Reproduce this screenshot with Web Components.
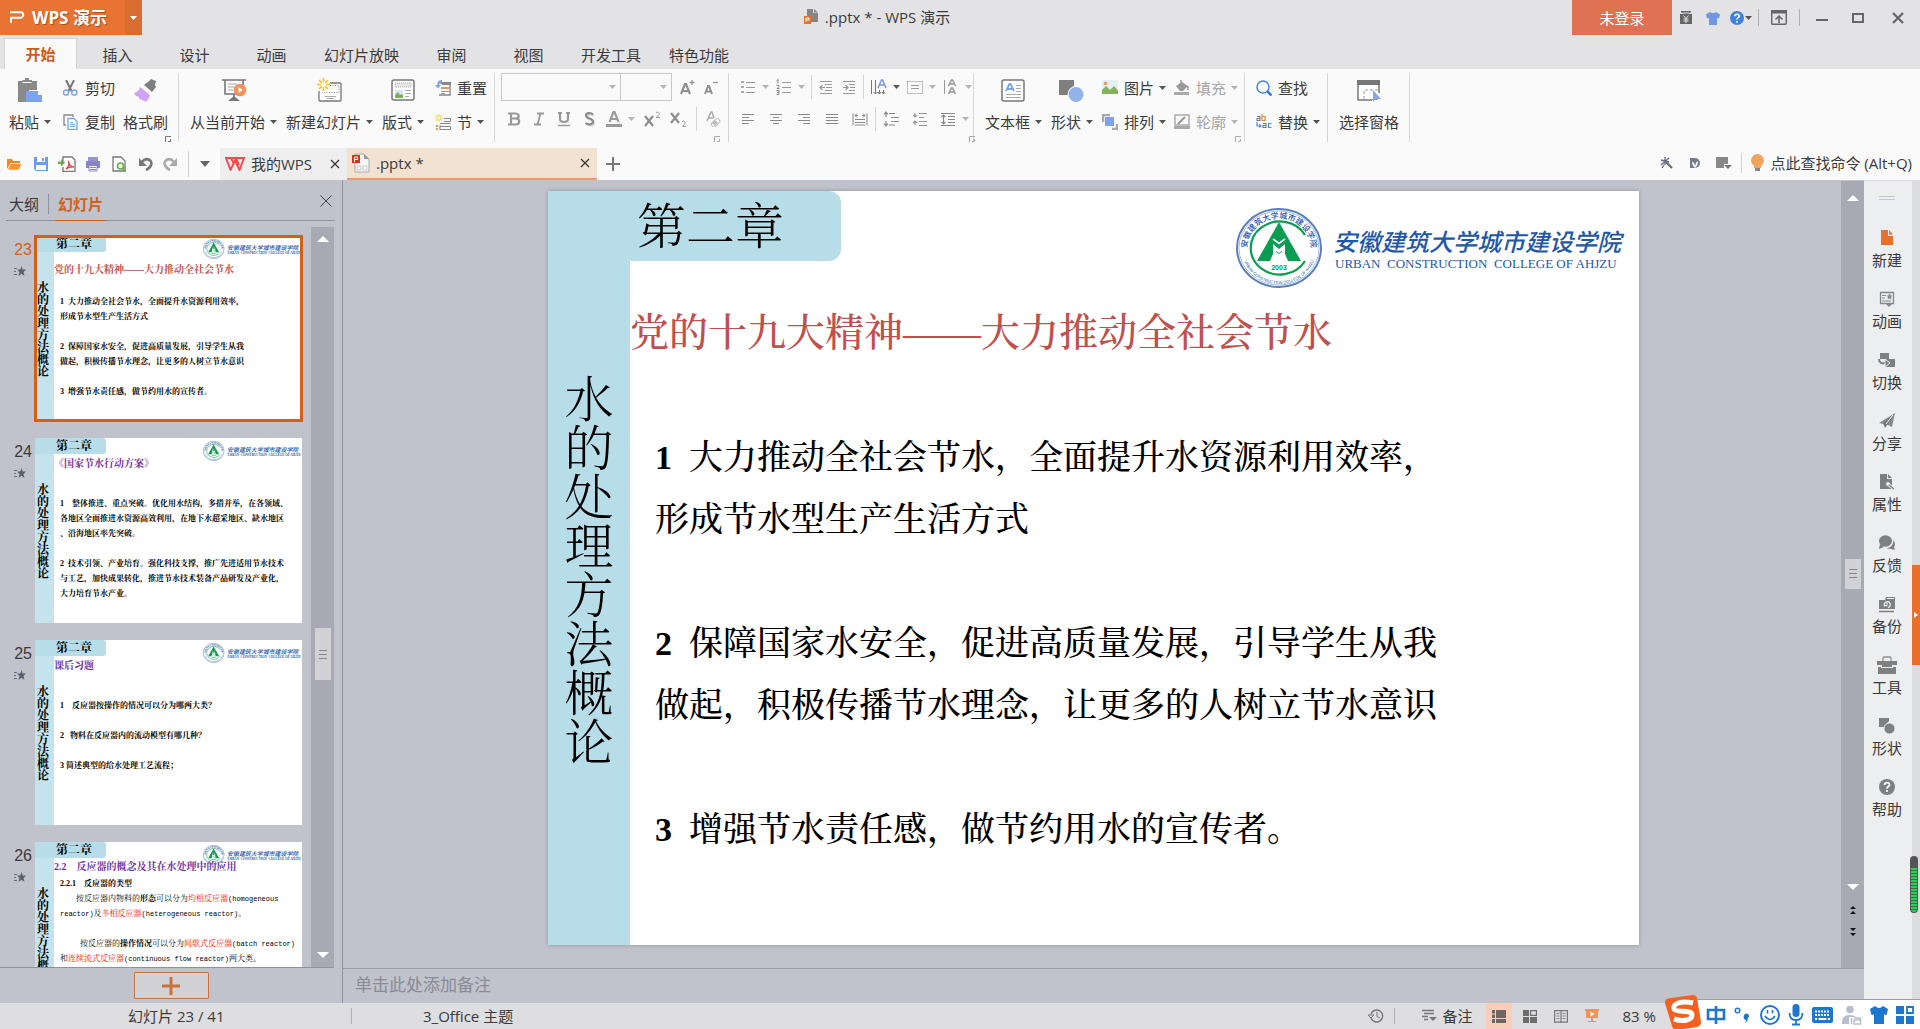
<!DOCTYPE html>
<html lang="zh-CN">
<head>
<meta charset="utf-8">
<title>.pptx * - WPS 演示</title>
<style>
    html, body {
        margin: 0;
        height: 100%;
    }

    body {
        overflow: hidden;
        font-family: "Open Sans", "Noto Sans CJK SC", sans-serif;
        font-size: 15px;
        line-height: 20px;
        color: #3a3a3a;
        background: #c0c2cc;
    }
</style>
</head>
<body>
<wps-app></wps-app>

<script>
// name: [width, height, markup]
const ICONS = {
    caret: [7, 4, '<path d="M0 0h7L3.500 4z" fill="currentColor"/>'],
    caretBig: [10, 6, '<path d="M0 0h10L5 6z" fill="#666"/>'],
    up: [12, 6, '<path d="M0 6h12L6 0z" fill="#fff"/>'],
    down: [12, 6, '<path d="M0 0h12L6 6z" fill="#fff"/>'],
    dblUp: [6, 8, '<path d="M0 3h6L3 0zM0 8h6L3 5z" fill="#111"/>'],
    dblDown: [6, 8, '<path d="M0 0h6L3 3zM0 5h6L3 8z" fill="#111"/>'],
    close: [10, 10, '<path d="M1 1l8 8M9 1l-8 8" stroke="#333" stroke-width="1.200" fill="none"/>'],
    closeThin: [12, 12, '<path d="M.5.5l11 11M11.500.5l-11 11" stroke="#444" fill="none"/>'],
    launcher: [6, 6, '<path d="M.5 6V.5H6M5.500 3v2.500H3" fill="none" stroke="#777"/>'],
    wpsP: [16, 13, '<path d="M1 1.200h10.500a2.500 2.500 0 0 1 0 5.500H2V12" fill="none" stroke="#fff" stroke-width="2"/>'],
    docTitle: [15, 15, '<path d="M3 0h6v4h5v9H3z" fill="#868686"/><path d="M10 0l4 3.500h-4z" fill="#868686"/><path d="M0 7h7v8H0z" fill="#e8702a"/><path d="M2 13V9h3v2H2.500" fill="none" stroke="#fff"/>'],
    yen: [12, 13, '<path d="M1 .5h10L9 2H3z" fill="none" stroke="#666"/><path d="M0 3h12v10H0z" fill="#666"/><path d="M3.500 4.500L6 7.500l2.500-3M3.500 8h5M3.500 10h5M6 7.500V12" stroke="#e3e3e5" fill="none"/>'],
    shirt: [14, 14, '<path d="M4 1c1 1.500 5 1.500 6 0l4 2.500-1 4-2-.5V14H3V7l-2 .5-1-4z" fill="#7097e4"/>'],
    helpBlue: [14, 14, '<circle cx="7" cy="7" r="7" fill="#3e82dc"/><path d="M4.800 5.300C5 2.500 9.400 2.800 9.200 5.300 9 6.800 7 6.600 7 8.500M7 10v1.700" stroke="#fff" stroke-width="1.600" fill="none"/>'],
    ribbonToggle: [16, 15, '<rect x=".7" y=".7" width="14.600" height="13.600" rx="1" fill="none" stroke="#666" stroke-width="1.400"/><path d="M0 0h16v3.500H0zM7.200 13V7h1.600v6z" fill="#666"/><path d="M4.500 9.500L8 6l3.500 3.500" stroke="#666" stroke-width="1.500" fill="none"/>'],
    min: [12, 10, '<path d="M0 6h12v2H0z" fill="#666"/>'],
    max: [12, 10, '<path d="M1 1h10v8H1z" fill="none" stroke="#666" stroke-width="2"/>'],
    quit: [12, 12, '<path d="M1 1l10 10M11 1L1 11" stroke="#666" stroke-width="2.300"/>'],
    paste: [26, 26, '<path d="M1 3h4.500V2H8V0h4v2h3v1h5v9H12v12H1z" fill="#8a8a8a"/><path d="M5.500 4.500h9" stroke="#fafafa"/><path d="M9 13h12l4 4v7H9z" fill="#7ca3ee"/><path d="M21 13v4h4z" fill="#fff"/>'],
    cut: [16, 16, '<path d="M3 0l5.500 11M11 0L5.500 11" stroke="#777" stroke-width="2"/><circle cx="3" cy="12.500" r="2.600" fill="none" stroke="#7ca3ee" stroke-width="1.500"/><circle cx="11.300" cy="12.500" r="2.600" fill="none" stroke="#7ca3ee" stroke-width="1.500"/>'],
    copy: [16, 16, '<path d="M3 11H1V1h9v2" fill="none" stroke="#888" stroke-width="1.300"/><path d="M5 4.500h6l3 3v8H5z" fill="#fff" stroke="#7ca3ee" stroke-width="1.300"/><path d="M7 8.500h3M7 10.500h5.500M7 12.500h5.500" stroke="#7ca3ee"/>'],
    brush: [26, 26, '<path d="M18 1l5 2-1 4 1 2-4 5-8-7 4-3z" fill="#7f7f7f"/><path d="M9 9l8 7-1 1-8-7z" fill="#fafafa"/><path d="M7 9l10 8c-1 4-3 6-5 7l-1-2-1 1-2-2-2 0 0-2-3-1-2-3c3-1 5-2 6-6z" fill="#cfa4f4"/>'],
    play: [26, 26, '<path d="M1 2h24M4 2v14h18V2M13 16v4" fill="none" stroke="#777" stroke-width="1.600"/><path d="M7 23l6-5 6 5z" fill="#777"/><path d="M7 6h9M7 9h6M7 12h5" stroke="#aaa"/><circle cx="19" cy="12" r="6.300" fill="#f0935b"/><path d="M17.500 9v6l4-3z" fill="#fff"/>'],
    newSlide: [26, 26, '<rect x="2" y="5" width="22" height="18" rx="1" fill="#fdfdfd" stroke="#777" stroke-width="1.300"/><path d="M13 7.500h9v7H5" fill="none" stroke="#888" stroke-dasharray="1 1.500"/><path d="M8 18.500h11M10 20.500h7" stroke="#aaa"/><path d="M0 0h13v13H0z" fill="#fafafa"/><path d="M6.500 0v13M0 6.500h13M2 2l9 9M11 2l-9 9" stroke="#fac22d" stroke-width="1.700"/><circle cx="6.500" cy="6.500" r="2.500" fill="#fff"/>'],
    layout: [26, 26, '<rect x="2" y="2" width="22" height="20" rx="2" fill="#fff" stroke="#777" stroke-width="1.500"/><path d="M5 5h16v4H5z" fill="#e6e6e6" stroke="#aaa" stroke-dasharray="1 1"/><path d="M5 12h8v8H5z" fill="#dbe8f4"/><path d="M5 20v-3l3-3 2 3 2-1 1 1v3z" fill="#7ab158"/><path d="M15 12.500h6M15 15.500h6M15 18.500h4" stroke="#aaa"/>'],
    reset: [16, 16, '<path d="M4 3h11v12H4" fill="#fff" stroke="#888" stroke-width="1.400"/><path d="M6 2h10v3H7z" fill="#888"/><path d="M6 8h8" stroke="#f0935b" stroke-width="2"/><path d="M6 11.500h8M6 13.500h4" stroke="#999"/><path d="M7 1C4 1 3 2.500 3 6" stroke="#7ca3ee" stroke-width="1.800" fill="none"/><path d="M0 5h6L3 8.500z" fill="#7ca3ee"/>'],
    section: [16, 16, '<path d="M9 4.500h6.500v3H9M5 9.500h10.500M5 12.500h10.500v3H5M5 11v5" fill="none" stroke="#888"/><path d="M4 0v8M0 4h8M1 1l6 6M7 1L1 7" stroke="#f8c83c"/><circle cx="4" cy="4" r="1.200" fill="#fff"/><path d="M1 11h2v2H1zM1 14h2v2H1z" fill="#f0935b"/>'],
    fontUp: [16, 16, '<path d="M1 15L5 5h1l4 10M2.500 12h6" fill="none" stroke="#8f8f8f" stroke-width="2.200"/><path d="M9.500 3.500h5M12 1v5" stroke="#999" stroke-width="1.300"/>'],
    fontDown: [16, 16, '<path d="M1 15l3-8h1l3 8M2.500 12.500h4" fill="none" stroke="#8f8f8f" stroke-width="2"/><path d="M9 3.500h5" stroke="#999" stroke-width="1.300"/>'],
    bold: [16, 16, '<path d="M5 2.500h4c5 0 5 5 0 5H5h4.500c5 0 5 6 0 6H5zM2 2.500h3v11H2" fill="none" stroke="#999" stroke-width="2.200"/>'],
    italic: [16, 16, '<path d="M6 2.500h7M3 13.500h7M9.500 2.500l-3 11" fill="none" stroke="#999" stroke-width="1.800"/>'],
    underline: [16, 16, '<path d="M2 2h4M10 2h4M4 2v6c0 4 8 4 8 0V2" fill="none" stroke="#999" stroke-width="2.200"/><path d="M2 14.500h12" stroke="#999" stroke-width="1.500"/>'],
    shadow: [16, 16, '<path d="M13 5C11 3 6 3 6 6c0 3 7 2 7 6 0 3-5 3-7 1" fill="none" stroke="#ddd" stroke-width="2.500"/><path d="M12 3.500C10 1.500 5 1.500 5 4.500c0 3.500 7 2.500 7 6 0 3.500-5 3.500-7.500 1.500" fill="none" stroke="#8c8c8c" stroke-width="2.200"/>'],
    fontColor: [16, 16, '<path d="M3.500 11L7.500 1h1l4 10M5 8h6" fill="none" stroke="#999" stroke-width="2.100"/><path d="M0 13h16v3H0z" fill="#999"/>'],
    sup: [17, 16, '<path d="M1 5l8 10M9 5L1 15" stroke="#8f8f8f" stroke-width="2.200"/><path d="M12 1.500c3-1 4 1 2.500 2.500L12 6.500h4" fill="none" stroke="#999"/>'],
    sub: [17, 16, '<path d="M1 2l8 10M9 2L1 12" stroke="#8f8f8f" stroke-width="2.200"/><path d="M12 10.500c3-1 4 1 2.500 2.500l-2 2.500h3.500" fill="none" stroke="#999"/>'],
    eraser: [16, 16, '<path d="M1 10L5 1h1l2 6M2.500 7h5" fill="none" stroke="#aaa" stroke-width="1.500"/><rect x="5" y="9" width="9" height="5" rx="1.500" transform="rotate(-45 10 11.500)" fill="#fff" stroke="#bbb"/><path d="M6 12l3 3 3-3-3-3z" fill="#bbb"/>'],
    bullets: [16, 16, '<path d="M1 2h3v2H1zM1 7h3v2H1zM1 12h3v2H1z" fill="#aaa"/><path d="M6 3.500h9M6 8.500h9M6 13.500h9" stroke="#999"/>'],
    numbers: [16, 16, '<path d="M2 .5v4M.5 1.500L2 .5M.5 6.500h2.500v1L1 9.500h2.500M.5 11.500h2.500v4H.5M1 13.500h2" stroke="#888" fill="none"/><path d="M6 3.500h9M6 8.500h9M6 13.500h9" stroke="#999"/>'],
    outdent: [16, 16, '<path d="M2 2.500h12M7 5.500h7M8 8.500h6M7 11.500h7M2 14.500h12M2 8.500h5M4.500 6L2 8.500 4.500 11" stroke="#999" fill="none" stroke-width="1.200"/>'],
    indent: [16, 16, '<path d="M2 2.500h12M8 5.500h6M9 8.500h5M8 11.500h6M2 14.500h12M2 8.500h5M4.500 6L7 8.500 4.500 11" stroke="#999" fill="none" stroke-width="1.200"/>'],
    textDir: [17, 16, '<path d="M1.500 1v14M5.500 1v14M9.500 11v4M13.500 11v4M3.500 13l2 2 2-2M8 13l1.500 2 1.500-2M12 13l1.500 2 1.500-2" fill="none" stroke="#777"/><path d="M8 9l3.500-8h1L16 9M9.500 6h5" fill="none" stroke="#7c98e0" stroke-width="1.600"/>'],
    vAlign: [16, 16, '<path d="M.5 2.500h15M.5 14.500h15M.5 2.500v12M15.500 2.500v12" fill="none" stroke="#888" stroke-dasharray="1 1"/><path d="M4 6.500h8M4 9.500h8" stroke="#999"/>'],
    spacing: [16, 16, '<path d="M1.500 1v14" stroke="#999"/><path d="M5.500 7l3-6h1l3 6M7 5h4M5.500 15l3-6h1l3 6M7 13h4" fill="none" stroke="#999" stroke-width="1.600"/>'],
    alignL: [16, 16, '<path d="M2 3.500h12M2 6.500h7M2 9.500h12M2 12.500h7" stroke="#888"/>'],
    alignC: [16, 16, '<path d="M2 3.500h12M5 6.500h6M2 9.500h12M5 12.500h6" stroke="#888"/>'],
    alignR: [16, 16, '<path d="M2 3.500h12M7 6.500h7M2 9.500h12M7 12.500h7" stroke="#888"/>'],
    justify: [16, 16, '<path d="M2 3.500h12M2 6.500h12M2 9.500h12M2 12.500h12" stroke="#888"/>'],
    distribute: [16, 16, '<path d="M1 2.500v12M15 2.500v12M3 8.500h10M3 11.500h10M3 14h10M3 4.500h3M10 4.500h3M5 2.500l-2 2 2 2M11 2.500l2 2-2 2" stroke="#888" fill="none"/>'],
    lineSp1: [17, 16, '<path d="M3 1v5M3 10v5M1 3.500L3 1l2 2.500M1 12.500L3 15l2-2.500M6 2.500h6M8 6.500h8M8 10.500h8M6 14h6" stroke="#888" fill="none" stroke-width="1.200"/>'],
    lineSp2: [16, 16, '<path d="M3 2v4M3 10v4M1 4l2 2 2-2M1 12l2-2 2 2M7 2.500h8M7 6.500h5M7 10.500h8M7 14.500h8" stroke="#999" fill="none" stroke-width="1.200"/>'],
    lineSp3: [16, 16, '<path d="M1 2.500h14M8 5.500h7M8 8.500h7M8 11.500h7M1 14.500h14M3.500 4v9M1.500 6l2-2 2 2M1.500 11l2 2 2-2" stroke="#888" fill="none" stroke-width="1.200"/>'],
    textBox: [26, 26, '<rect x="1" y="2" width="22" height="21" rx="2" fill="#fff" stroke="#777" stroke-width="1.500"/><path d="M5 13l3.500-7h1L13 13M6.500 11h5" fill="none" stroke="#7ca3ee" stroke-width="1.800"/><path d="M15 7.500h5M15 10.500h5M15 13.500h5M5 16.500h15M5 19.500h15" stroke="#aaa"/>'],
    shapes: [26, 26, '<path d="M0 2h15v15H0z" fill="#7f7f7f"/><circle cx="17" cy="16.500" r="8.500" fill="#fafafa"/><circle cx="17" cy="16.500" r="7.500" fill="#93b2ea"/>'],
    picture: [16, 16, '<path d="M0 0h16v14H0z" fill="#e6edf3"/><circle cx="3.500" cy="3.500" r="1.800" fill="#f0935b"/><path d="M0 14v-4l4-4 4 4 4-4 4 5v3z" fill="#83b25d"/>'],
    arrange: [16, 16, '<path d="M1 8V1h7M15 10v5h-5" fill="none" stroke="#aaa" stroke-width="2.500"/><path d="M3 3h9v9H3z" fill="#7ca3ee"/>'],
    fill: [16, 16, '<path d="M2 6l6-4 6 4-5 5H6z" fill="#999"/><path d="M7 0v5M14 6v4" stroke="#999" stroke-width="1.500"/><path d="M0 12h15v3H0z" fill="#aaa"/>'],
    outline: [16, 16, '<path d="M1 11V1h14v10z" fill="none" stroke="#aaa" stroke-width="1.500"/><path d="M4 10L11 3" stroke="#999" stroke-width="2.200"/><path d="M0 12h16v3H0z" fill="#aaa"/>'],
    find: [16, 16, '<circle cx="7" cy="7" r="6" fill="none" stroke="#4a86d8" stroke-width="1.500"/><path d="M11.500 11.500l4 4" stroke="#3a78d0" stroke-width="2.500"/>'],
    replace: [16, 16, '<path d="M1 2.500h3v4H1v-2h3M7 9.500h3v4H7v-2h3" fill="none" stroke="#777" stroke-width="1.100"/><path d="M6 0v6.500h3v-4H6" fill="none" stroke="#e08a4a" stroke-width="1.200"/><path d="M15.500 9.500h-3v4h3M1 8v4h4M3.500 10.500L5 12l-1.500 1.500" fill="none" stroke="#4a90dd" stroke-width="1.200"/>'],
    selectPane: [26, 26, '<path d="M2 3h21v19H2z" fill="#fff" stroke="#777" stroke-width="1.500"/><path d="M1 2h23v5H1z" fill="#777"/><path d="M8 21v-9h15M23 12v4" fill="none" stroke="#999" stroke-dasharray="3 2"/><path d="M16 22h8v3h-8zM22 15h3v8h-3z" fill="#fafafa"/><path d="M17 12v12l2.500-3h5.500z" fill="#8aa4e8"/>'],
    open: [18, 16, '<path d="M1 13V3h5l1 2h7v2H5z" fill="#f5871f"/><path d="M4.500 7.500H16L13 14H1.500z" fill="#ff9331" stroke="#fff" stroke-width=".6"/>'],
    save: [18, 16, '<path d="M2 1h14v14H4l-2-2z" fill="#6c9cec"/><path d="M5 1h8v5H5zM4 9h10v5H4z" fill="#fff"/><path d="M10 2h2v3h-2z" fill="#6c9cec"/>'],
    pdf: [18, 16, '<path d="M5 5V1h9l3 3v11.500H5V11" fill="#fff" stroke="#777" stroke-width="1.300"/><path d="M0 5.500h3V3l4 3.700-4 3.800V8H0z" fill="#69a84e"/><path d="M8 13c4-3 3-6 2.500-8 .5 5 3 6 5.500 6-3-.5-5 0-8 2z" fill="none" stroke="#e04040" stroke-width="1.300"/>'],
    print: [18, 16, '<path d="M4 1h10v4H4z" fill="#9894cf"/><path d="M2 5h14v7H2z" fill="#8985c4"/><path d="M5 9.500h8V15H5z" fill="#fff" stroke="#8985c4"/><path d="M6 11.500h6M6 13.500h6" stroke="#8985c4"/>'],
    preview: [18, 16, '<path d="M3 15V1h8l4 4v10z" fill="#fff" stroke="#777" stroke-width="1.300"/><circle cx="10.500" cy="10" r="3" fill="#fff" stroke="#69a84e" stroke-width="1.600"/><path d="M12.500 12l3 3.500" stroke="#69a84e" stroke-width="2"/>'],
    undo: [18, 16, '<path d="M6 6C11 0 17 5 15 9c-1 3-3 4-5 5" fill="none" stroke="#777" stroke-width="2.600"/><path d="M3 2v8h8z" fill="#777"/>'],
    redo: [18, 16, '<path d="M12 6C7 0 1 5 3 9c1 3 3 4 5 5" fill="none" stroke="#aaa" stroke-width="2.600"/><path d="M15 2v8H7z" fill="#aaa"/>'],
    wpsW: [20, 14, '<path d="M1 1h18l-4.500 12L10 3.500 5.500 13zM6 1l2.500 5M11 1l3 7" fill="none" stroke="#f4484c" stroke-width="1.900"/>'],
    docTab: [18, 20, '<path d="M3 1h9l5 5v13H3z" fill="#f6f6f6" stroke="#aaa"/><path d="M12 1v5h5z" fill="#999"/><path d="M0 2h8v8H0z" fill="#cc3a14"/><path d="M2.500 9V4h3v2.500h-3" fill="none" stroke="#fff"/><path d="M5 13h4v4H5zM11 13h4v4h-4z" fill="none" stroke="#ccc"/>'],
    plus: [14, 14, '<path d="M0 7h14M7 0v14" stroke="#777" stroke-width="2"/>'],
    wand: [14, 12, '<path d="M6 5l6 6" stroke="#666b7a" stroke-width="2.200"/><path d="M5 0v8M1 3l8 2M9 1L1 8M2 11l2-3" stroke="#666b7a" stroke-width="1.300"/>'],
    docer: [12, 12, '<path d="M1 1h5a5 5 0 0 1 0 10H1z" fill="#767b8c"/><path d="M6 11C3 8 3 6 3.500 4.500 5 6 6 7 6 11zM6 11c0-4 1-6 3-7 0 3-1 5-3 7z" fill="#fff"/>'],
    boxDown: [16, 14, '<path d="M0 1h12v7H8v4H0z" fill="#888"/><path d="M8 9h8l-4 4z" fill="#777"/>'],
    bulb: [13, 18, '<circle cx="6.500" cy="6.500" r="6.500" fill="#f0a45f"/><path d="M3 10h7v4H3z" fill="#f0a45f"/><path d="M4 14h5v3H4z" fill="#888"/>'],
    star: [12, 10, '<path d="M0 2.500h3M0 5.500h2M0 8.500h3" stroke="#666c7a"/><path d="M7.500 0l1.200 3.500H12L9.500 6l1 4-3-2.300-3 2.300 1-4L3 3.500h3.300z" fill="#59606e"/>'],
    addSlide: [18, 18, '<path d="M0 9h18M9 0v18" stroke="#c9713f" stroke-width="3"/>'],
    grip: [8, 9, '<path d="M0 .5h8M0 4.500h8M0 8.500h8" stroke="#888"/>'],
    sideGrip: [16, 4, '<path d="M0 .5h16M0 3.500h16" stroke="#c4c8d2"/>'],
    sNew: [20, 18, '<path d="M4 1h7v6h5v9H4z" fill="#e8702a"/><path d="M12 1l4 4.500h-4z" fill="#e8702a"/>'],
    sAnim: [20, 18, '<path d="M3.500 2.500h13v11h-13z" fill="none" stroke="#888" stroke-width="1.300"/><path d="M5 5.500h4M5 8h3M5 11h9" stroke="#888"/><path d="M12.500 3l1 2.500h2L14 7l.5 2.500-2-1.200-2 1.200L11 7 9.500 5.500h2zM9 14h6l-3 3z" fill="#888"/>'],
    sSwitch: [20, 18, '<path d="M3 2h9v6H3zM9 8h9v8H9z" fill="#7f7f7f"/><path d="M2 8c0 4 3 5 7 4" fill="none" stroke="#7f7f7f" stroke-width="2"/><path d="M8 8l5 4-5 4z" fill="#7f7f7f" stroke="#eceef0"/>'],
    sShare: [20, 18, '<path d="M2 11L18 1l-3 14-4-2z" fill="#888"/><path d="M6 11l2 5 2-3 5-8z" fill="#777"/><path d="M16 3l-7 9" stroke="#eceef0"/>'],
    sProps: [20, 18, '<path d="M3 1h7v5h5v10H3z" fill="#7f7f7f"/><path d="M11 1l4 4h-4z" fill="#7f7f7f"/><circle cx="11" cy="11" r="2.500" fill="#eceef0" stroke="#7f7f7f"/><path d="M12 12l5 4" stroke="#eceef0" stroke-width="3"/><path d="M12 12l5 4" stroke="#7f7f7f" stroke-width="1.500"/>'],
    sFeedback: [20, 18, '<ellipse cx="8.500" cy="7" rx="6.500" ry="5.800" fill="#7f7f7f"/><path d="M3 10l-1 5 5-2zM16 6c3 3 2 6 1 7l1 3-4-1c-3 0-4-1-4-1 4 0 7-4 6-8z" fill="#7f7f7f"/>'],
    sBackup: [20, 18, '<path d="M2 5h6l1-3h9v12H2z" fill="#7f7f7f"/><path d="M10 3.500h7" stroke="#eceef0"/><path d="M2 16.500h15" stroke="#7f7f7f" stroke-width="1.500"/><path d="M8 11.500a3 3 0 1 1 3 1" fill="none" stroke="#eceef0" stroke-width="1.300"/><path d="M10 7v4l-3-1" fill="none" stroke="#eceef0"/>'],
    sTools: [20, 18, '<path d="M6 5V2.500Q6 1 7 1h6q1 0 1 1.500V5" fill="none" stroke="#8f8f8f" stroke-width="1.300"/><path d="M0 5h20v4h-5v2H5V9H0zM1 11h3v1h12v-1h3v7H1z" fill="#7f7f7f"/>'],
    sShapes: [20, 18, '<path d="M2 1h10v3l-5 6H2z" fill="#7f7f7f"/><circle cx="12.500" cy="11.500" r="5.500" fill="#7f7f7f" stroke="#eceef0"/>'],
    sHelp: [20, 18, '<circle cx="10" cy="9" r="8" fill="#7f7f7f"/><path d="M7.500 7c.3-3.500 5.300-3 5 0-.2 1.700-2.500 1.500-2.500 3.800M10 12v2" stroke="#fff" stroke-width="1.700" fill="none"/>'],
    history: [16, 16, '<path d="M3 10a6 6 0 1 0 0-4" fill="none" stroke="#777" stroke-width="1.400"/><path d="M0 7h6L3 10zM9 4v4.500l3 1.500" fill="none" stroke="#777"/>'],
    notes: [16, 14, '<path d="M1 1.500h12M3 4.500h10M1 7.500h6M3 10.500h4" stroke="#777" stroke-width="1.300"/><path d="M8 8h8l-4 4z" fill="#777"/>'],
    vNormal: [14, 13, '<path d="M0 0h3v3.500H0zM0 4.500h3V8H0zM0 9h3v4H0zM4 0h10v8H4zM4 9h10v4H4z" fill="#6f6663"/>'],
    vSorter: [14, 13, '<path d="M0 0h6v6H0zM0 7h6v6H0zM7 7h7v6H7z" fill="#6c6c6c"/><path d="M7.600.6h5.800v4.800H7.600z" fill="none" stroke="#6c6c6c" stroke-width="1.200"/>'],
    vRead: [14, 13, '<path d="M.6.6h12.800v11.500H.6zM7 0v13" fill="none" stroke="#777" stroke-width="1.200"/><path d="M2.500 3.500h3M2.500 6h3M2.500 8.500h3M8.500 3.500h3M8.500 6h3M8.500 8.500h3" stroke="#888"/>'],
    vShow: [14, 14, '<path d="M0 0h14v2h-1v7H8v3h3v1H3v-1h3V9H1V2H0z" fill="#f0935b"/><path d="M5.500 2.500v5l4-2.500z" fill="#fff"/>'],
    sogou: [38, 34, '<path d="M4 3.500L29 0q3 0 4 3l4 24q0 4-4 5l-20 3q-4 0-5-4L1 8q0-4 3-4.500z" fill="#f4601f"/><path d="M29 8C17 5 8 9 10 14c2 4 18 0 18 6 0 5-8 7-18 4" fill="none" stroke="#fff" stroke-width="5"/>'],
    zhong: [20, 20, '<path d="M2 5h16v9H2zM10 1v18" fill="none" stroke="#1e76cf" stroke-width="2.600"/>'],
    punct: [18, 20, '<circle cx="3.500" cy="5.500" r="2.300" fill="none" stroke="#1e76cf" stroke-width="1.500"/><path d="M10 11a2.500 2.500 0 1 1 4 2q0 3-3 5 1-2 1-3a2.500 2.500 0 0 1-2-4z" fill="#1e76cf"/>'],
    smile: [20, 20, '<circle cx="10" cy="10" r="9" fill="none" stroke="#1e76cf" stroke-width="2"/><path d="M5 11q5 7 10 0M7.500 5v3.500M12.500 5v3.500" fill="none" stroke="#1e76cf" stroke-width="1.600"/>'],
    mic: [16, 22, '<rect x="4.500" y="0" width="7" height="13" rx="3.500" fill="#1e76cf"/><path d="M1.500 9q0 7 6.500 7t6.500-7M8 16v5M4 20.500h8" fill="none" stroke="#1e76cf" stroke-width="1.800"/>'],
    keyboard: [22, 18, '<rect x="0" y="1" width="21" height="16" rx="2" fill="#1e76cf"/><path d="M3 5.500h15M3 9h15" stroke="#fff" stroke-width="2" stroke-dasharray="2 1"/><path d="M3 13h2M6.500 13h8M16 13h2" stroke="#fff" stroke-width="2"/>'],
    person: [20, 20, '<circle cx="8" cy="4.500" r="3.800" fill="#b6bed0"/><path d="M0 19q-1-9 8-9 4 0 6 2H7v7z" fill="#b6bed0"/><path d="M9.500 13v6M12 13h6.500v6H12v-4h6" fill="none" stroke="#b6bed0" stroke-width="1.500"/>'],
    shirtBlue: [18, 20, '<path d="M5 1q4 4 8 0l5 3-1.500 6L14 9.500V19H4V9.500L1.500 10 0 4z" fill="#1e76cf"/>'],
    apps: [18, 20, '<path d="M0 1h8v8H0zM0 11h8v8H0zM10 11h8v8h-8z" fill="#1e76cf"/><path d="M11 2h6v6h-6z" fill="none" stroke="#1e76cf" stroke-width="1.800"/>']
};

class WpsElement extends HTMLElement {
    constructor() {
        super();
        this.attachShadow({ mode: 'open' });
    }

    connectedCallback() {
        const template = document.createElement('template');
        template.innerHTML = `<style>${this.getStyles()}</style>${this.getTemplate()}`;
        this.shadowRoot.replaceChildren(template.content.cloneNode(true));
    }
}

class WpsIcon extends WpsElement {
    getStyles() {
        return `
            :host { display: block; flex: none; }
            svg { display: block; }
        `;
    }

    getTemplate() {
        const [w, h, body] = ICONS[this.getAttribute('name')];
        return `<svg width="${w}" height="${h}" viewBox="0 0 ${w} ${h}" aria-hidden="true">${body}</svg>`;
    }
}

// Button with an icon, an optional text and an optional caret
class WpsButton extends WpsElement {
    getStyles() {
        return `
            :host { display: block; flex: none; }
            button {
                display: flex;
                align-items: center;
                gap: var(--gap, 6px);
                padding: 0;
                border: 0;
                background: none;
                font: inherit;
                color: inherit;
                white-space: nowrap;
            }
            .label { display: flex; align-items: center; gap: 5px; }
            .caret { color: #555; }
            :host([large]) button { flex-direction: column; gap: var(--gap, 5px); }
            :host([large]) .label { line-height: 26px; }
            :host([off]) button { color: #a6a6a6; }
            :host([off]) .caret { color: #b4b4b4; }
        `;
    }

    getTemplate() {
        const text = this.textContent.trim();
        const tip = this.getAttribute('tip');
        const caret = this.hasAttribute('caret') ? '<wps-icon class="caret" name="caret"></wps-icon>' : '';
        return `
        <button type="button" ${tip ? `aria-label="${tip}"` : ''}>
            <wps-icon name="${this.getAttribute('icon')}"></wps-icon>
            ${text ? `<span class="label"><slot></slot>${caret}</span>` : caret}
        </button>
        `;
    }
}

class WpsTitlebar extends WpsElement {
    getStyles() {
        return `
            :host { display: flex; align-items: stretch; height: 35px; background: #e3e3e5; }
            button { padding: 0; border: 0; font: inherit; }
            .brand {
                display: flex;
                align-items: center;
                gap: 7px;
                width: 125px;
                padding-left: 9px;
                background: #e87332;
                color: #fff;
                font-size: 17px;
                font-weight: 700;
                text-shadow: 1px 1px 1px #a8501c;
            }
            .more { display: grid; place-items: center; width: 17px; background: #d96c30; color: #fff; }
            .doc { flex: 1; display: flex; align-items: center; justify-content: center; gap: 6px; padding: 0 0 2px 40px; }
            .login { width: 100px; background: #df7153; color: #fff; }
            .tools { display: flex; align-items: center; gap: 14px; padding-left: 8px; }
            .tools hr { width: 1px; height: 17px; margin: 0 -2px; border: 0; background: #b0b0b4; }
            .tools .help { --gap: 1px; margin: 0 -6px 0 -4px; }
            .win { display: flex; align-items: center; gap: 24px; padding: 0 16px 0 18px; }
            .win :last-child { padding-left: 4px; }
        `;
    }

    getTemplate() {
        return `
        <button class="brand"><wps-icon name="wpsP"></wps-icon>WPS 演示</button>
        <button class="more" aria-label="应用菜单"><wps-icon name="caret"></wps-icon></button>
        <div class="doc"><wps-icon name="docTitle"></wps-icon><span>.pptx * - WPS 演示</span></div>
        <button class="login">未登录</button>
        <div class="tools">
            <wps-button icon="yen" tip="会员"></wps-button>
            <wps-button icon="shirt" tip="皮肤"></wps-button>
            <wps-button class="help" icon="helpBlue" tip="帮助" caret></wps-button>
            <hr>
            <wps-button icon="ribbonToggle" tip="功能区"></wps-button>
            <hr>
        </div>
        <div class="win">
            <wps-button icon="min" tip="最小化"></wps-button>
            <wps-button icon="max" tip="最大化"></wps-button>
            <wps-button icon="quit" tip="关闭"></wps-button>
        </div>
        `;
    }
}

class WpsMenu extends WpsElement {
    getStyles() {
        return `
            :host { display: block; background: #e3e3e5; }
            nav { display: flex; height: 34px; padding-left: 4px; }
            button {
                min-width: 77px;
                padding: 6px 14px 0;
                border: 0;
                background: none;
                font: inherit;
                color: inherit;
            }
            .active {
                min-width: 73px;
                margin: 3px 2px 0 0;
                padding-top: 0;
                border: 1px solid #d4d4d6;
                border-bottom: 0;
                background: #fafafa;
                color: #d2571c;
                font-weight: 700;
            }
        `;
    }

    getTemplate() {
        const tabs = ['开始', '插入', '设计', '动画', '幻灯片放映', '审阅', '视图', '开发工具', '特色功能'];
        return `<nav>${tabs.map((t, i) => `<button ${i ? '' : 'class="active"'}>${t}</button>`).join('')}</nav>`;
    }
}

class WpsGroup extends WpsElement {
    getStyles() {
        return `
            :host {
                display: grid;
                flex: none;
                height: 69px;
                margin-top: 4px;
                border-right: 1px solid #d6d6d8;
            }
            .content { grid-area: 1 / 1; display: flex; padding: 0 11px; }
            .launcher { grid-area: 1 / 1; place-self: end; margin-right: 8px; }
            :host([tight]) .content { padding: 0 6px; }
            :host([off]) .launcher { opacity: .6; }
        `;
    }

    getTemplate() {
        const launcher = this.hasAttribute('launcher') ? '<wps-icon class="launcher" name="launcher"></wps-icon>' : '';
        return `<div class="content"><slot></slot></div>${launcher}`;
    }
}

class WpsRibbon extends WpsElement {
    getStyles() {
        return `
            :host { display: flex; height: 79px; background: #fafafa; }
            wps-button[large] { padding-top: 5px; }
            .rows { display: grid; grid-template-rows: 34px 34px; align-items: center; margin-top: -2px; }
            .fmt { display: grid; grid-template-rows: 28px 36px; }
            .line { display: flex; align-items: center; gap: 9px; }
            .line hr { width: 1px; height: 24px; margin: 0; border: 0; background: #d6d6d8; }
            .fonts { gap: 0; }
            .fonts wps-button { padding-left: 8px; }
            select {
                box-sizing: border-box;
                height: 28px;
                border: 1px solid #c8c8ca;
                border-radius: 0;
                background: #fafafa;
                appearance: none;
            }
            .combo { display: grid; align-items: center; justify-items: end; }
            .combo > * { grid-area: 1 / 1; }
            .combo wps-icon { margin-right: 5px; color: #b4b4b4; pointer-events: none; }
            .name { width: 120px; }
            .size { width: 52px; margin-left: -1px; }
            .para .line { gap: 7px; }
            .para .line hr { margin: 0 -1px; }
            .para .wide { gap: 12px; }
            .para .wide hr { margin: 0 -5px; }
        `;
    }

    getTemplate() {
        return `
        <wps-group launcher style="width:178px">
            <wps-button large icon="paste" caret style="margin-left:-2px">粘贴</wps-button>
            <div class="rows" style="margin-left:12px">
                <wps-button icon="cut">剪切</wps-button>
                <wps-button icon="copy">复制</wps-button>
            </div>
            <wps-button large icon="brush" style="margin-left:8px">格式刷</wps-button>
        </wps-group>
        <wps-group style="width:315px">
            <wps-button large icon="play" caret>从当前开始</wps-button>
            <wps-button large icon="newSlide" caret style="margin-left:9px">新建幻灯片</wps-button>
            <wps-button large icon="layout" caret style="margin-left:9px">版式</wps-button>
            <div class="rows" style="margin-left:11px">
                <wps-button icon="reset">重置</wps-button>
                <wps-button icon="section" caret>节</wps-button>
            </div>
        </wps-group>
        <wps-group tight launcher off style="width:233px">
            <div class="fmt">
                <div class="line fonts">
                    <span class="combo name"><select class="name" aria-label="字体"></select><wps-icon name="caret"></wps-icon></span>
                    <span class="combo size"><select class="size" aria-label="字号"></select><wps-icon name="caret"></wps-icon></span>
                    <wps-button icon="fontUp" tip="增大字号"></wps-button>
                    <wps-button icon="fontDown" tip="减小字号"></wps-button>
                </div>
                <div class="line" style="padding-left:5px">
                    <wps-button icon="bold" tip="加粗"></wps-button>
                    <wps-button icon="italic" tip="倾斜"></wps-button>
                    <wps-button icon="underline" tip="下划线"></wps-button>
                    <wps-button icon="shadow" tip="阴影"></wps-button>
                    <wps-button icon="fontColor" tip="字体颜色" caret off></wps-button>
                    <wps-button icon="sup" tip="上标"></wps-button>
                    <wps-button icon="sub" tip="下标"></wps-button>
                    <hr>
                    <wps-button icon="eraser" tip="清除格式"></wps-button>
                </div>
            </div>
        </wps-group>
        <wps-group launcher off style="width:244px">
            <div class="fmt para">
                <div class="line">
                    <wps-button icon="bullets" tip="项目符号" caret off></wps-button>
                    <wps-button icon="numbers" tip="编号" caret off></wps-button>
                    <hr>
                    <wps-button icon="outdent" tip="减少缩进"></wps-button>
                    <wps-button icon="indent" tip="增加缩进"></wps-button>
                    <hr>
                    <wps-button icon="textDir" tip="文字方向" caret></wps-button>
                    <wps-button icon="vAlign" tip="对齐文本" caret off></wps-button>
                    <wps-button icon="spacing" tip="字符间距" caret off></wps-button>
                </div>
                <div class="line wide">
                    <wps-button icon="alignL" tip="左对齐"></wps-button>
                    <wps-button icon="alignC" tip="居中"></wps-button>
                    <wps-button icon="alignR" tip="右对齐"></wps-button>
                    <wps-button icon="justify" tip="两端对齐"></wps-button>
                    <wps-button icon="distribute" tip="分散对齐"></wps-button>
                    <hr>
                    <wps-button icon="lineSp1" tip="增大段落间距"></wps-button>
                    <wps-button icon="lineSp2" tip="减小段落间距"></wps-button>
                    <wps-button icon="lineSp3" tip="行距" caret off></wps-button>
                </div>
            </div>
        </wps-group>
        <wps-group launcher off style="width:270px">
            <wps-button large icon="textBox" caret>文本框</wps-button>
            <wps-button large icon="shapes" caret style="margin-left:9px">形状</wps-button>
            <div class="rows" style="margin-left:9px">
                <wps-button icon="picture" caret>图片</wps-button>
                <wps-button icon="arrange" caret>排列</wps-button>
            </div>
            <div class="rows" style="margin-left:8px">
                <wps-button icon="fill" caret off>填充</wps-button>
                <wps-button icon="outline" caret off>轮廓</wps-button>
            </div>
        </wps-group>
        <wps-group style="width:82px">
            <div class="rows">
                <wps-button icon="find">查找</wps-button>
                <wps-button icon="replace" caret>替换</wps-button>
            </div>
        </wps-group>
        <wps-group style="width:81px">
            <wps-button large icon="selectPane">选择窗格</wps-button>
        </wps-group>
        `;
    }
}

class WpsDocbar extends WpsElement {
    getStyles() {
        return `
            :host { display: flex; align-items: stretch; height: 32px; background: #fafafa; }
            .quick { display: flex; align-items: center; gap: 8px; padding: 0 10px 0 6px; }
            hr { width: 1px; height: 26px; margin: 0; border: 0; background: #d0d0d2; }
            .tab { box-sizing: border-box; display: flex; align-items: center; gap: 6px; padding: 0 7px 0 5px; background: #eee; }
            .tab span { flex: 1; }
            .home { width: 127px; }
            .doc { width: 250px; border-bottom: 2px solid #ec9a6c; background: #f1e2d2; }
            .add { align-self: center; padding-left: 9px; }
            .right { flex: 1; display: flex; align-items: center; justify-content: flex-end; gap: 15px; padding: 0 8px 2px 0; }
            .right hr { height: 20px; margin: 0 -6px; }
        `;
    }

    getTemplate() {
        return `
        <div class="quick">
            <wps-button icon="open" tip="打开"></wps-button>
            <wps-button icon="save" tip="保存"></wps-button>
            <wps-button icon="pdf" tip="输出为PDF"></wps-button>
            <wps-button icon="print" tip="打印"></wps-button>
            <wps-button icon="preview" tip="打印预览"></wps-button>
            <wps-button icon="undo" tip="撤销"></wps-button>
            <wps-button icon="redo" tip="恢复"></wps-button>
            <hr>
            <wps-button icon="caretBig" tip="自定义" style="padding-left:3px"></wps-button>
        </div>
        <div class="tab home">
            <wps-icon name="wpsW"></wps-icon><span>我的WPS</span><wps-button icon="close" tip="关闭"></wps-button>
        </div>
        <div class="tab doc">
            <wps-icon name="docTab"></wps-icon><span>.pptx *</span><wps-button icon="close" tip="关闭"></wps-button>
        </div>
        <wps-button class="add" icon="plus" tip="新建"></wps-button>
        <div class="right">
            <wps-button icon="wand" tip="美化"></wps-button>
            <wps-button icon="docer" tip="稻壳"></wps-button>
            <wps-button icon="boxDown" tip="任务窗格"></wps-button>
            <hr>
            <wps-button icon="bulb">点此查找命令 (Alt+Q)</wps-button>
        </div>
        `;
    }
}

class WpsScrollbar extends WpsElement {
    getStyles() {
        return `
            :host { display: flex; flex: none; flex-direction: column; align-items: center; width: 23px; background: #a9a9b3; }
            .end { display: grid; place-items: center; height: 24px; }
            .thumb { display: grid; place-items: center; width: 16px; height: ${this.getAttribute('size')}px; background: #d2d2d6; }
        `;
    }

    getTemplate() {
        return `
        <wps-icon class="end" name="up"></wps-icon>
        <div style="flex:${this.getAttribute('before')}"></div>
        <div class="thumb"><wps-icon name="grip"></wps-icon></div>
        <div style="flex:${this.getAttribute('after')}"></div>
        <wps-icon class="end" name="down"></wps-icon>
        <slot></slot>
        `;
    }
}

class CollegeLogo extends WpsElement {
    getStyles() {
        return `
            :host { display: block; }
            svg { display: block; width: 100%; height: auto; overflow: visible; }
            text { font-family: "Liberation Serif", "Noto Sans CJK SC", serif; fill: #2257a6; }
        `;
    }

    getTemplate() {
        return `
        <svg viewBox="0 0 391 80" role="img" aria-label="安徽建筑大学城市建设学院">
            <g transform="translate(43 40)">
                <ellipse rx="42" ry="39" fill="#fff" stroke="#5a7fbd" stroke-width="2"/>
                <ellipse rx="40" ry="37" fill="none" stroke="#a9bedd"/>
                <path d="M26-13A29 26.500 0 1 0 26 13" fill="none" stroke="#0a9c50" stroke-width="2.200"/>
                <path d="M0-26L22 13H-22z" fill="#0a9c50"/>
                <path d="M-6-9L0-4.500 6-9" fill="none" stroke="#fff" stroke-width="1.600"/>
                <path d="M-6-4L0 1 6-4V6L9 13H3V3L0 5-3 3V13H-9L-6 6z" fill="#fff"/>
                <path d="M-3 4L0 6 3 4V13H-3z" fill="#fff"/>
                <text y="22" text-anchor="middle" style="font:bold 7px Liberation Sans;fill:#0a9c50">2003</text>
                <path id="top" d="M-30 11A32 30 0 1 1 30 11" fill="none"/>
                <path id="bottom" d="M-36 9A37 35 0 0 0 36 9" fill="none"/>
                <text font-size="8" font-weight="500" text-anchor="middle"><textPath href="#top" startOffset="50%">安徽建筑大学城市建设学院</textPath></text>
                <text style="font-family:Liberation Sans" font-size="4" text-anchor="middle"><textPath href="#bottom" startOffset="50%">URBAN CONSTRUCTION COLLEGE OF AHJZU</textPath></text>
            </g>
            <text x="97" y="43" font-size="24" font-weight="500" font-style="italic">安徽建筑大学城市建设学院</text>
            <text x="99" y="60" font-size="13" style="white-space:pre">URBAN  CONSTRUCTION  COLLEGE OF AHJZU</text>
        </svg>
        `;
    }
}

class WpsSlide extends WpsElement {
    getStyles() {
        return `
            :host {
                display: grid;
                grid-template-columns: 82px 1fr;
                grid-template-rows: 70px 1fr;
                overflow: hidden;
                background: #fff;
                color: #000;
                font-family: "Liberation Serif", "Noto Serif CJK SC", "Noto Sans CJK SC", serif;
                font-size: 34px;
                line-height: 62px;
                font-weight: 500;
            }
            h2, h3 { margin: 0; }
            h2, .rail { font-size: 49px; font-weight: 300; }
            .rail {
                grid-area: 1 / 1 / 3 / 2;
                display: flex;
                justify-content: center;
                padding-top: 185px;
                background: #b7dee8;
                line-height: 49px;
            }
            .rail span { width: 1em; word-break: break-all; }
            .chapter {
                grid-area: 1 / 1 / 2 / 3;
                justify-self: start;
                box-sizing: border-box;
                width: 293px;
                padding: 4px 0 0 89px;
                border-radius: 0 12px 12px 0;
                background: #b7dee8;
                line-height: 66px;
            }
            college-logo { grid-area: 1 / 2; justify-self: end; width: 391px; margin: 17px 12px 0 0; }
            .page { grid-area: 2 / 2; }
            .title {
                padding: 43px 0 65px;
                color: #c0504d;
                font-size: 39px;
                font-weight: 500;
                line-height: 58px;
                white-space: pre;
            }
            .body { padding-left: 25px; white-space: pre; }

            /* Sidebar preview */
            :host([thumb]) {
                grid-template-columns: 19px 1fr;
                grid-template-rows: 16px 1fr;
                font-size: 8px;
                line-height: 15px;
                font-weight: 700;
            }
            :host([thumb]) .rail {
                justify-content: flex-start;
                padding: 46px 0 0 2px;
                background: #c5e3ec;
                font-size: 12px;
                font-weight: 700;
                line-height: 12px;
            }
            :host([thumb]) .chapter {
                width: 71px;
                padding: 0 0 0 21px;
                border-radius: 0 3px 3px 0;
                font-size: 12px;
                font-weight: 700;
                line-height: 16px;
            }
            :host([thumb]) college-logo { width: 97px; margin: 3px 2px 0 0; }
            :host([thumb]) .title { padding: 2px 0 24px; color: #7030a0; font-size: 10px; font-weight: 700; line-height: 16px; }
            :host([thumb]) .body { padding-left: 6px; }
            :host([lead]) .title { padding: 10px 0 16px; color: #c0504d; }
            :host([dense]) .title { padding: 1px 0; }
        `;
    }

    getTemplate() {
        return `
        <div class="rail"><span>水的处理方法概论</span></div>
        <h2 class="chapter">第二章</h2>
        <college-logo></college-logo>
        <div class="page">
            <h3 class="title"><slot name="title"></slot></h3>
            <div class="body"><slot></slot></div>
        </div>
        `;
    }
}

class WpsThumb extends WpsElement {
    getStyles() {
        return `
            :host { display: grid; grid-template-columns: 35px 267px; height: 185px; }
            .side { display: flex; flex-direction: column; align-items: flex-end; gap: 6px; padding: 4px 3px 0 0; }
            .no { font-family: "Liberation Sans", sans-serif; font-size: 16px; }
            wps-icon { margin-right: 6px; }
            .frame { display: grid; }
            :host([selected]) .no { color: #d45f15; }
            :host([selected]) .frame { outline: 3px solid #d45f15; outline-offset: -2px; }
        `;
    }

    getTemplate() {
        return `
        <div class="side"><span class="no">${this.getAttribute('no')}</span><wps-icon name="star"></wps-icon></div>
        <div class="frame"><slot></slot></div>
        `;
    }
}

class WpsOutline extends WpsElement {
    getStyles() {
        return `
            :host { display: flex; flex: none; flex-direction: column; width: 342px; border-right: 1px solid #8f919e; background: #c0c2cc; }
            header { display: flex; align-items: stretch; height: 40px; margin: 0 7px 0 6px; border-bottom: 1px solid #8f919e; }
            header button { padding: 7px 3px 0; border: 0; background: none; font: inherit; color: inherit; }
            header hr { width: 1px; height: 20px; margin: 14px 6px 0; border: 0; background: #8f919e; }
            header .active { height: 41px; border-bottom: 1px solid #d45f15; color: #d45f15; font-weight: 700; }
            header .close { margin: 15px 3px 0 auto; }
            .view { flex: 1; display: flex; min-height: 0; margin: 6px 8px 0 0; border-bottom: 1px solid #8f919e; }
            .list { flex: 1; display: flex; flex-direction: column; gap: 17px; padding-top: 9px; overflow: hidden; }
            .list > * { flex: none; }
            footer { display: grid; place-items: center; height: 35px; }
            footer button { display: grid; place-items: center; width: 75px; height: 27px; padding: 0; border: 1px solid #c9713f; border-radius: 1px; background: #d2d2d6; }
            .plain { font-weight: 400; }
            .r { color: #f00; font-weight: 400; }
            .m { font-family: "Liberation Mono", monospace; font-size: 7px; font-weight: 400; line-height: 1px; }
        `;
    }

    getTemplate() {
        return `
        <header>
            <button>大纲</button><hr><button class="active">幻灯片</button>
            <wps-button class="close" icon="closeThin" tip="关闭"></wps-button>
        </header>
        <div class="view">
            <div class="list">
                <wps-thumb no="23" selected><wps-slide thumb lead><span slot="title">党的十九大精神——大力推动全社会节水</span>1  大力推动全社会节水，全面提升水资源利用效率，
形成节水型生产生活方式

2  保障国家水安全，促进高质量发展，引导学生从我
做起，积极传播节水理念，让更多的人树立节水意识

3  增强节水责任感，做节约用水的宣传者。</wps-slide></wps-thumb>
                <wps-thumb no="24"><wps-slide thumb><span slot="title">《国家节水行动方案》</span>1    整体推进、重点突破。优化用水结构，多措并举，在各领域、
各地区全面推进水资源高效利用，在地下水超采地区、缺水地区
、沿海地区率先突破。

2  技术引领、产业培育。强化科技支撑，推广先进适用节水技术
与工艺，加快成果转化，推进节水技术装备产品研发及产业化，
大力培育节水产业。</wps-slide></wps-thumb>
                <wps-thumb no="25"><wps-slide thumb><span slot="title">课后习题</span>1    反应器按操作的情况可以分为哪两大类？

2   物料在反应器内的流动模型有哪几种？

3 简述典型的给水处理工艺流程；</wps-slide></wps-thumb>
                <wps-thumb no="26"><wps-slide thumb dense><span slot="title">2.2    反应器的概念及其在水处理中的应用</span>2.2.1    反应器的类型
<span class="plain">        按反应器内物料的</span>形态<span class="plain">可以分为</span><span class="r">均相反应器</span><span class="m">(homogeneous</span>
<span class="m">reactor)</span><span class="plain">及</span><span class="r">多相反应器</span><span class="m">(heterogeneous reactor)</span>。

<span class="plain">          按反应器的</span>操作情况<span class="plain">可以分为</span><span class="r">间歇式反应器</span><span class="m">(batch reactor)</span>
<span class="plain">和</span><span class="r">连续流式反应器</span><span class="m">(continuous flow reactor)</span><span class="plain">两大类。</span></wps-slide></wps-thumb>
            </div>
            <wps-scrollbar before="377" after="263" size="52"></wps-scrollbar>
        </div>
        <footer><button aria-label="新建幻灯片"><wps-icon name="addSlide"></wps-icon></button></footer>
        `;
    }
}

class WpsEditor extends WpsElement {
    getStyles() {
        return `
            :host { display: flex; flex: 1; flex-direction: column; min-width: 0; }
            .stage { flex: 1; display: flex; min-height: 0; }
            .canvas { flex: 1; display: flex; justify-content: center; padding: 11px 0 23px 3px; }
            wps-slide { height: 100%; aspect-ratio: 1091 / 754; box-shadow: 0 0 4px #9092a0; }
            wps-scrollbar { box-sizing: border-box; margin-top: 1px; padding: 5px 0 25px; }
            .jump { display: grid; place-items: center; height: 22px; }
            textarea {
                flex: none;
                box-sizing: border-box;
                height: 35px;
                padding: 6px 12px;
                border: 0;
                border-top: 1px solid #9a9ca8;
                background: #c0c2cc;
                font: 17px/20px "Open Sans", "Noto Sans CJK SC", sans-serif;
                resize: none;
            }
            textarea::placeholder { color: #898b96; }
        `;
    }

    getTemplate() {
        return `
        <div class="stage">
            <div class="canvas">
                <wps-slide><span slot="title">党的十九大精神——大力推动全社会节水</span><b>1</b>  大力推动全社会节水，全面提升水资源利用效率，
形成节水型生产生活方式

<b>2</b>  保障国家水安全，促进高质量发展，引导学生从我
做起，积极传播节水理念，让更多的人树立节水意识

<b>3</b>  增强节水责任感，做节约用水的宣传者。</wps-slide>
            </div>
            <wps-scrollbar before="350" after="287" size="30">
                <wps-icon class="jump" name="dblUp"></wps-icon>
                <wps-icon class="jump" name="dblDown"></wps-icon>
            </wps-scrollbar>
        </div>
        <textarea aria-label="备注" placeholder="单击此处添加备注"></textarea>
        `;
    }
}

class WpsSidebar extends WpsElement {
    getStyles() {
        return `
            :host { display: flex; flex: none; background: #dcdcde; }
            nav { display: flex; flex-direction: column; align-items: center; width: 46px; padding-right: 2px; margin-top: 1px; background: #eceef0; }
            .grip { padding: 15px 0 29px; }
            .tool { --gap: 0px; height: 61px; }
            .edge { display: flex; flex-direction: column; width: 8px; }
            .edge button { display: grid; place-items: center; height: 100px; margin-top: 385px; padding: 0; border: 0; background: #e8702a; }
        `;
    }

    getTemplate() {
        const tools = [
            ['sNew', '新建'], ['sAnim', '动画'], ['sSwitch', '切换'], ['sShare', '分享'], ['sProps', '属性'],
            ['sFeedback', '反馈'], ['sBackup', '备份'], ['sTools', '工具'], ['sShapes', '形状'], ['sHelp', '帮助']
        ];
        return `
        <nav>
            <wps-icon class="grip" name="sideGrip"></wps-icon>
            ${tools.map(([icon, text]) => `<wps-button class="tool" large icon="${icon}">${text}</wps-button>`).join('')}
        </nav>
        <div class="edge">
            <button aria-label="展开"><svg width="4" height="6"><path d="M0 0v6l4-3z" fill="#fff"/></svg></button>
        </div>
        `;
    }
}

class WpsStatus extends WpsElement {
    getStyles() {
        return `
            :host { display: flex; align-items: center; height: 26px; background: #dedee0; }
            .page { width: 223px; padding-left: 128px; }
            hr { width: 1px; height: 16px; margin: 0; border: 0; background: #b0b0b4; }
            .theme { flex: 1; padding-left: 71px; }
            .notes { padding: 0 13px 0 26px; }
            .view { display: grid; place-items: center; width: 26px; height: 26px; margin-right: 5px; }
            .on { background: #f9cdb9; }
            .zoom { padding: 0 264px 0 13px; }
            .history { padding-right: 10px; }
        `;
    }

    getTemplate() {
        return `
        <span class="page">幻灯片 23 / 41</span><hr>
        <span class="theme">3_Office 主题</span>
        <wps-button class="history" icon="history" tip="历史"></wps-button><hr>
        <wps-button class="notes" icon="notes">备注</wps-button>
        <wps-button class="view on" icon="vNormal" tip="普通视图"></wps-button>
        <wps-button class="view" icon="vSorter" tip="浏览视图"></wps-button>
        <wps-button class="view" icon="vRead" tip="阅读视图"></wps-button>
        <wps-button class="view" icon="vShow" tip="放映"></wps-button>
        <span class="zoom">83 %</span>
        `;
    }
}

// Input method bar that floats over the window corner
class ImeBar extends WpsElement {
    getStyles() {
        return `
            :host { position: fixed; right: 0; bottom: 0; display: flex; align-items: flex-end; width: 256px; }
            .keys {
                flex: 1;
                display: flex;
                align-items: center;
                justify-content: space-between;
                height: 29px;
                margin-left: -18px;
                padding: 0 6px 0 22px;
                border-top: 1px solid #9a9ca8;
                background: #fff;
            }
            .mark { z-index: 1; }
        `;
    }

    getTemplate() {
        const keys = ['zhong', 'punct', 'smile', 'mic', 'keyboard', 'person', 'shirtBlue', 'apps'];
        return `
        <wps-icon class="mark" name="sogou"></wps-icon>
        <div class="keys">${keys.map(k => `<wps-icon name="${k}"></wps-icon>`).join('')}</div>
        `;
    }
}

class WpsApp extends WpsElement {
    getStyles() {
        return `
            :host { display: flex; flex-direction: column; height: 100vh; }
            main { flex: 1; display: flex; min-height: 0; }
            .meter {
                position: fixed;
                right: 2px;
                bottom: 116px;
                box-sizing: border-box;
                width: 8px;
                height: 57px;
                border: 1px solid #555;
                border-top-width: 12px;
                border-radius: 4px;
                background: repeating-linear-gradient(#2ecc5a 0 2px, #3c6b48 2px 3px);
            }
        `;
    }

    getTemplate() {
        return `
        <wps-titlebar></wps-titlebar>
        <wps-menu></wps-menu>
        <wps-ribbon></wps-ribbon>
        <wps-docbar></wps-docbar>
        <main>
            <wps-outline></wps-outline>
            <wps-editor></wps-editor>
            <wps-sidebar></wps-sidebar>
        </main>
        <wps-status></wps-status>
        <div class="meter"></div>
        <ime-bar></ime-bar>
        `;
    }
}

customElements.define('wps-icon', WpsIcon);
customElements.define('wps-button', WpsButton);
customElements.define('wps-titlebar', WpsTitlebar);
customElements.define('wps-menu', WpsMenu);
customElements.define('wps-group', WpsGroup);
customElements.define('wps-ribbon', WpsRibbon);
customElements.define('wps-docbar', WpsDocbar);
customElements.define('wps-scrollbar', WpsScrollbar);
customElements.define('college-logo', CollegeLogo);
customElements.define('wps-slide', WpsSlide);
customElements.define('wps-thumb', WpsThumb);
customElements.define('wps-outline', WpsOutline);
customElements.define('wps-editor', WpsEditor);
customElements.define('wps-sidebar', WpsSidebar);
customElements.define('wps-status', WpsStatus);
customElements.define('ime-bar', ImeBar);
customElements.define('wps-app', WpsApp);
</script>
</body>
</html>
